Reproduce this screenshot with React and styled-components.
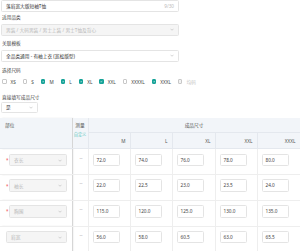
import React from 'react';
import styled, { createGlobalStyle } from 'styled-components';

const GlobalStyle = createGlobalStyle`
  html, body {
    margin: 0;
    padding: 0;
    background: #ffffff;
  }
  body {
    font-family: "Noto Sans", "Noto Sans CJK SC", sans-serif;
    font-size: 4.7px;
    color: #333333;
  }
  * {
    box-sizing: border-box;
  }
`;

const Page = styled.div`
  width: 300px;
  height: 251px;
  overflow: hidden;
  padding-left: 1px;
`;

const FieldLabel = styled.div`
  margin: ${(p) => p.$top}px 0 ${(p) => p.$bottom}px 1px;
  height: 6px;
  line-height: 6px;
  color: #444444;
`;

const Control = styled.div`
  display: flex;
  align-items: center;
  justify-content: space-between;
  width: ${(p) => p.$width}px;
  height: ${(p) => p.$height || 12}px;
  padding: 0 ${(p) => p.$pad || 4}px;
  border: 1px solid #e4e4e4;
  border-radius: 1.5px;
  background: ${(p) => (p.$disabled ? '#f5f5f5' : '#ffffff')};
  color: ${(p) => (p.$muted ? '#b8b8b8' : '#333333')};
  white-space: nowrap;
  overflow: hidden;
`;

const Counter = styled.span`
  color: #bbbbbb;
`;

const CheckRow = styled.div`
  display: flex;
  align-items: center;
  gap: 7px;
  height: 6px;
  margin: 5.7px 0 0 1px;
`;

const CheckItem = styled.label`
  display: flex;
  align-items: center;
  gap: 4px;
  color: ${(p) => (p.$disabled ? '#c4c4c4' : '#444444')};
`;

const Box = styled.span`
  display: inline-flex;
  align-items: center;
  justify-content: center;
  width: 4.5px;
  height: 4.5px;
  border-radius: 1px;
  border: 0.6px solid ${(p) => (p.$checked ? '#17a398' : '#c8c8c8')};
  background: ${(p) => (p.$checked ? '#17a398' : p.$disabled ? '#f2f2f2' : '#ffffff')};
`;

const SizeTable = styled.table`
  width: 300px;
  margin: 5px 0 0 -1px;
  table-layout: fixed;
  border-collapse: collapse;
`;

const HeadRow = styled.tr`
  height: ${(p) => p.$h}px;
`;

const HeadCell = styled.th`
  padding: ${(p) => p.$pad || '0 4px'};
  background: #f2f5f9;
  border-right: 1px solid #e4e8ee;
  border-bottom: 1px solid #e4e8ee;
  color: #555555;
  font-weight: normal;
  text-align: ${(p) => p.$align || 'left'};
  vertical-align: ${(p) => p.$valign || 'middle'};
  line-height: 6px;
  white-space: nowrap;
`;

const PartHead = styled(HeadCell)`
  border-right: 1px solid #d6d6d6;
  box-shadow: 1.5px 0 1.5px rgba(0, 0, 0, 0.1);
`;

const CustomLink = styled.div`
  margin-top: 4px;
  color: #5cc6bd;
  font-size: 4.2px;
`;

const BodyRow = styled.tr`
  height: 25.7px;
`;

const BodyCell = styled.td`
  padding: 4.3px 0 0 ${(p) => p.$left || 4}px;
  border-right: 1px solid #eeeeee;
  border-bottom: 1px solid #eeeeee;
  vertical-align: top;
`;

const PartCell = styled(BodyCell)`
  padding: 4.3px 5px 0 6px;
  border-right: 1px solid #d6d6d6;
  box-shadow: 1.5px 0 1.5px rgba(0, 0, 0, 0.1);
`;

const PartWrap = styled.div`
  display: flex;
  align-items: center;
`;

const Star = styled.span`
  width: 3px;
  color: #f04a4a;
  font-size: 4.5px;
`;

const Dash = styled.div`
  height: 9px;
  line-height: 9px;
  text-align: center;
  color: #9a9a9a;
  padding-right: 2px;
`;

const ValueInput = styled.div`
  width: 27px;
  height: 12.5px;
  line-height: 11px;
  padding-left: 3px;
  border: 1px solid #e4e4e4;
  border-radius: 1.5px;
  color: #444444;
`;

const Chevron = () => (
  <svg width="4" height="3" viewBox="0 0 8 5">
    <path d="M1 1l3 3 3-3" fill="none" stroke="#b0b0b0" strokeWidth="1.1" />
  </svg>
);

const Tick = () => (
  <svg width="3.4" height="3" viewBox="0 0 8 7">
    <path d="M1 3.5l2.3 2.3L7 1.5" fill="none" stroke="#ffffff" strokeWidth="1.6" />
  </svg>
);

const sizes = [
  { name: 'XS', checked: false },
  { name: 'S', checked: false },
  { name: 'M', checked: true },
  { name: 'L', checked: true },
  { name: 'XL', checked: true },
  { name: 'XXL', checked: true },
  { name: 'XXXXL', checked: false },
  { name: 'XXXL', checked: true },
  { name: '均码', checked: false, disabled: true },
];

const columns = ['M', 'L', 'XL', 'XXL', 'XXXL'];

const rows = [
  { part: '衣长', required: true, values: ['72.0', '74.0', '76.0', '78.0', '80.0'] },
  { part: '袖长', required: true, values: ['22.0', '22.5', '23.0', '23.5', '24.0'] },
  { part: '胸围', required: true, values: ['115.0', '120.0', '125.0', '130.0', '135.0'] },
  { part: '肩宽', required: false, values: ['56.0', '58.0', '60.5', '63.0', '65.5'] },
];

const App = () => {
  return (
    <Page>
      <GlobalStyle />
      <Control $width={178}>
        <span>落肩宽大版短袖T恤</span>
        <Counter>9/30</Counter>
      </Control>

      <FieldLabel $top={1.7} $bottom={4.3}>适用品类</FieldLabel>
      <Control $width={178} $disabled $muted>
        <span>男装 / 大码男装 / 男士上装 / 男士T恤及背心</span>
        <Chevron />
      </Control>

      <FieldLabel $top={4.3} $bottom={3.7}>关联模板</FieldLabel>
      <Control $width={178}>
        <span>全品类通用 - 有袖上衣 (宽松版型)</span>
        <Chevron />
      </Control>

      <FieldLabel $top={5} $bottom={0}>选择尺码</FieldLabel>
      <CheckRow>
        {sizes.map((s) => (
          <CheckItem key={s.name} $disabled={s.disabled}>
            <Box $checked={s.checked} $disabled={s.disabled}>
              {s.checked && <Tick />}
            </Box>
            {s.name}
          </CheckItem>
        ))}
      </CheckRow>

      <FieldLabel $top={9} $bottom={2.3}>直接填写成品尺寸</FieldLabel>
      <Control $width={37} $height={11}>
        <span>是</span>
        <Chevron />
      </Control>

      <SizeTable>
        <colgroup>
          <col style={{ width: 72 }} />
          <col style={{ width: 16 }} />
          <col style={{ width: 42 }} />
          <col style={{ width: 42 }} />
          <col style={{ width: 43 }} />
          <col style={{ width: 42 }} />
          <col style={{ width: 43 }} />
        </colgroup>
        <thead>
          <HeadRow $h={15}>
            <PartHead rowSpan={2} $valign="top" $pad="4px 5px">
              部位
            </PartHead>
            <HeadCell rowSpan={2} $valign="top" $align="center" $pad="4px 0">
              测量
              <CustomLink>自定义</CustomLink>
            </HeadCell>
            <HeadCell colSpan={5} $align="center">
              成品尺寸
            </HeadCell>
          </HeadRow>
          <HeadRow $h={16}>
            {columns.map((c) => (
              <HeadCell key={c} $align="right" $pad="0 4px 0 0">
                {c}
              </HeadCell>
            ))}
          </HeadRow>
        </thead>
        <tbody>
          {rows.map((r) => (
            <BodyRow key={r.part}>
              <PartCell>
                <PartWrap>
                  {r.required && <Star>*</Star>}
                  <Control $width={r.required ? 58 : 61} $height={12.5} $disabled $muted>
                    <span>{r.part}</span>
                    <Chevron />
                  </Control>
                </PartWrap>
              </PartCell>
              <BodyCell $left={0}>
                <Dash>--</Dash>
              </BodyCell>
              {r.values.map((v, i) => (
                <BodyCell key={columns[i]}>
                  <ValueInput>{v}</ValueInput>
                </BodyCell>
              ))}
            </BodyRow>
          ))}
        </tbody>
      </SizeTable>
    </Page>
  );
};

export default App;
